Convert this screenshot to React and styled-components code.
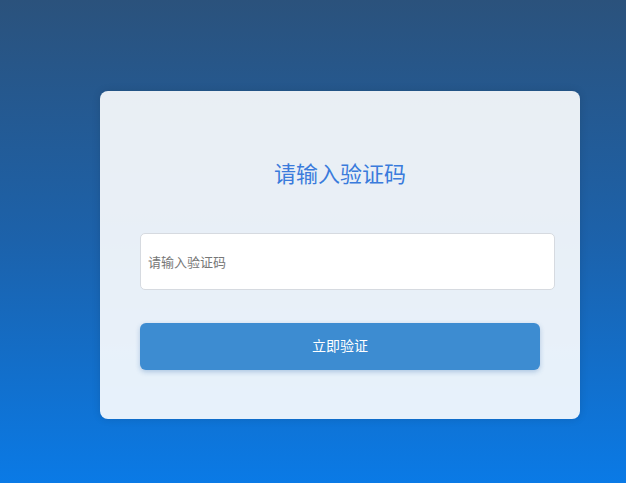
import React from 'react';
import styled, { createGlobalStyle } from 'styled-components';

const GlobalStyle = createGlobalStyle`
  html, body {
    margin: 0;
    padding: 0;
    height: 100%;
  }
  body {
    font-family: "Noto Sans CJK SC", "Liberation Sans", sans-serif;
  }
  * {
    box-sizing: border-box;
  }
`

const Page = styled.div`
  height: 100vh;
  padding: 91px 0 0 100px;
  background: linear-gradient(180deg, #2b527c 0%, #1c62ab 50%, #0a7ae6 100%);
`

const Card = styled.div`
  width: 480px;
  height: 328px;
  padding: 57px 25px 0 40px;
  border-radius: 8px;
  background: rgba(255, 255, 255, 0.9);
  box-shadow: 0 0 8px rgba(0, 0, 0, 0.12);
`

const Title = styled.h2`
  margin: 0;
  padding-right: 15px;
  height: 48px;
  line-height: 48px;
  text-align: center;
  font-size: 22px;
  font-weight: normal;
  color: #3a7bdc;
`

const Input = styled.input`
  display: block;
  width: 415px;
  height: 57px;
  margin-top: 37px;
  padding: 0 7px;
  border: 1px solid #d6dae0;
  border-radius: 5px;
  background: #fff;
  font-family: inherit;
  font-size: 13px;
  color: #333;
  outline: none;

  &::placeholder {
    color: #777;
  }
`

const Button = styled.button`
  display: block;
  width: 400px;
  height: 47px;
  margin-top: 33px;
  padding: 0 0 3px;
  border: none;
  border-radius: 6px;
  background: #3d8cd1;
  color: #fff;
  font-family: inherit;
  font-size: 14px;
  box-shadow: 0 2px 5px rgba(40, 100, 170, 0.3);
  cursor: pointer;
`

export default function App() {
  return (
    <>
      <GlobalStyle />
      <Page>
        <Card>
          <Title>请输入验证码</Title>
          <Input placeholder="请输入验证码" />
          <Button>立即验证</Button>
        </Card>
      </Page>
    </>
  );
}
